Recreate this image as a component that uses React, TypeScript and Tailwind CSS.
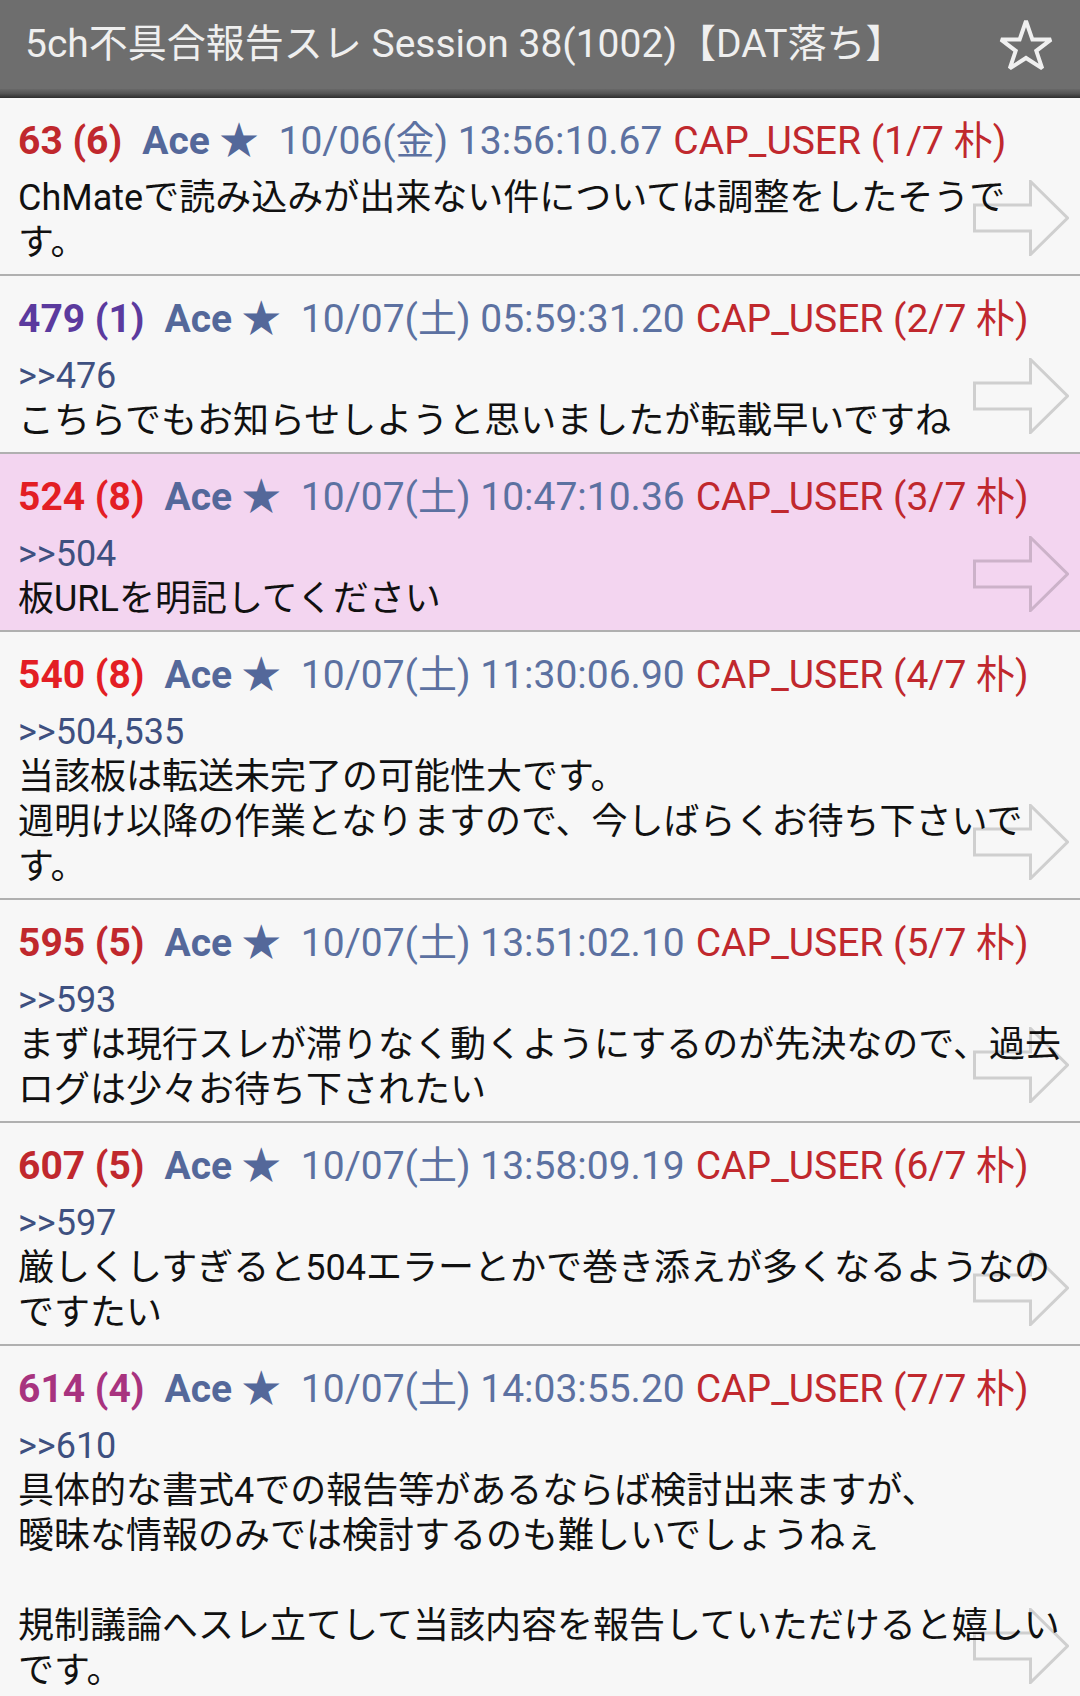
import React from "react";

interface Post {
  no: number;
  count: number;
  date: string;
  numColor: string;
  anchor?: string;
  lines: string[];
  highlight?: boolean;
}

const posts: Post[] = [
  {
    no: 63,
    count: 6,
    date: "10/06(金) 13:56:10.67",
    numColor: "text-[#c0282d]",
    lines: ["ChMateで読み込みが出来ない件については調整をしたそうです。"],
  },
  {
    no: 479,
    count: 1,
    date: "10/07(土) 05:59:31.20",
    numColor: "text-[#5b3a9e]",
    anchor: ">>476",
    lines: ["こちらでもお知らせしようと思いましたが転載早いですね"],
  },
  {
    no: 524,
    count: 8,
    date: "10/07(土) 10:47:10.36",
    numColor: "text-[#e31e24]",
    anchor: ">>504",
    lines: ["板URLを明記してください"],
    highlight: true,
  },
  {
    no: 540,
    count: 8,
    date: "10/07(土) 11:30:06.90",
    numColor: "text-[#e31e24]",
    anchor: ">>504,535",
    lines: ["当該板は転送未完了の可能性大です。", "週明け以降の作業となりますので、今しばらくお待ち下さいです。"],
  },
  {
    no: 595,
    count: 5,
    date: "10/07(土) 13:51:02.10",
    numColor: "text-[#c0282d]",
    anchor: ">>593",
    lines: ["まずは現行スレが滞りなく動くようにするのが先決なので、過去ログは少々お待ち下されたい"],
  },
  {
    no: 607,
    count: 5,
    date: "10/07(土) 13:58:09.19",
    numColor: "text-[#c0282d]",
    anchor: ">>597",
    lines: ["厳しくしすぎると504エラーとかで巻き添えが多くなるようなのですたい"],
  },
  {
    no: 614,
    count: 4,
    date: "10/07(土) 14:03:55.20",
    numColor: "text-[#a8337f]",
    anchor: ">>610",
    lines: [
      "具体的な書式4での報告等があるならば検討出来ますが、",
      "曖昧な情報のみでは検討するのも難しいでしょうねぇ",
      "",
      "規制議論へスレ立てして当該内容を報告していただけると嬉しいです。",
    ],
  },
];

function StarOutline() {
  return (
    <svg width="58" height="56" viewBox="0 0 58 56" fill="none">
      <polygon
        points="29,4 35.4,22.6 54,22.6 39.3,33.8 45.2,51.4 29,41 12.8,51.4 18.7,33.8 4,22.6 22.6,22.6"
        stroke="#f0f0f0"
        strokeWidth="4"
        strokeLinejoin="miter"
        strokeMiterlimit={2.5}
      />
    </svg>
  );
}

function ArrowRight() {
  return (
    <svg width="96" height="76" viewBox="0 0 96 76" fill="none">
      <path
        d="M1.5 25 H57.5 V1.5 L94.5 38 L57.5 74.5 V51 H1.5 Z"
        stroke="#000"
        strokeOpacity="0.16"
        strokeWidth="3"
      />
    </svg>
  );
}

function PostRow({ p, index }: { p: Post; index: number }) {
  return (
    <div
      className={`relative border-b-2 border-[#b0b0b0] pt-[18px] pb-[8px] pl-[18px] pr-[10px] ${
        p.highlight ? "bg-[#f3d5f0]" : "bg-[#f7f7f7]"
      }`}
    >
      <div className="h-[50px] leading-[50px] text-[39px] whitespace-nowrap mb-[10px]">
        <span className={`font-bold ${p.numColor}`}>
          {p.no} ({p.count})
        </span>
        <span className="ml-[20px] font-bold text-[#54689a]">Ace ★</span>
        <span className="ml-[20px] text-[#5c71a1]">{p.date}</span>
        <span className="ml-[11px] text-[#c0282d]">CAP_USER ({index + 1}/7 朴)</span>
      </div>
      <div className="text-[36px] leading-[45px] text-[#111111]">
        {p.anchor && <div className="text-[#3e5080]">{p.anchor}</div>}
        {p.lines.map((l, i) => (
          <div key={i}>{l || "\u00a0"}</div>
        ))}
      </div>
      <div className="absolute right-[11px] bottom-[18px]">
        <ArrowRight />
      </div>
    </div>
  );
}

export default function App() {
  return (
    <div className="w-[1080px] bg-[#f7f7f7] font-[Roboto,'Noto_Sans_CJK_JP',sans-serif]">
      <div className="bg-[#6e6e6e]">
        <div className="h-[89px] flex items-center justify-between pl-[25px] pr-[25px]">
          <h1 className="text-[39px] text-[#efefef] whitespace-nowrap">
            5ch不具合報告スレ Session 38(1002)【DAT落ち】
          </h1>
          <StarOutline />
        </div>
        <div className="h-[9px] bg-gradient-to-b from-[#686868] via-[#545454] to-[#2e2e2e]" />
      </div>
      {posts.map((p, i) => (
        <PostRow key={p.no} p={p} index={i} />
      ))}
    </div>
  );
}
